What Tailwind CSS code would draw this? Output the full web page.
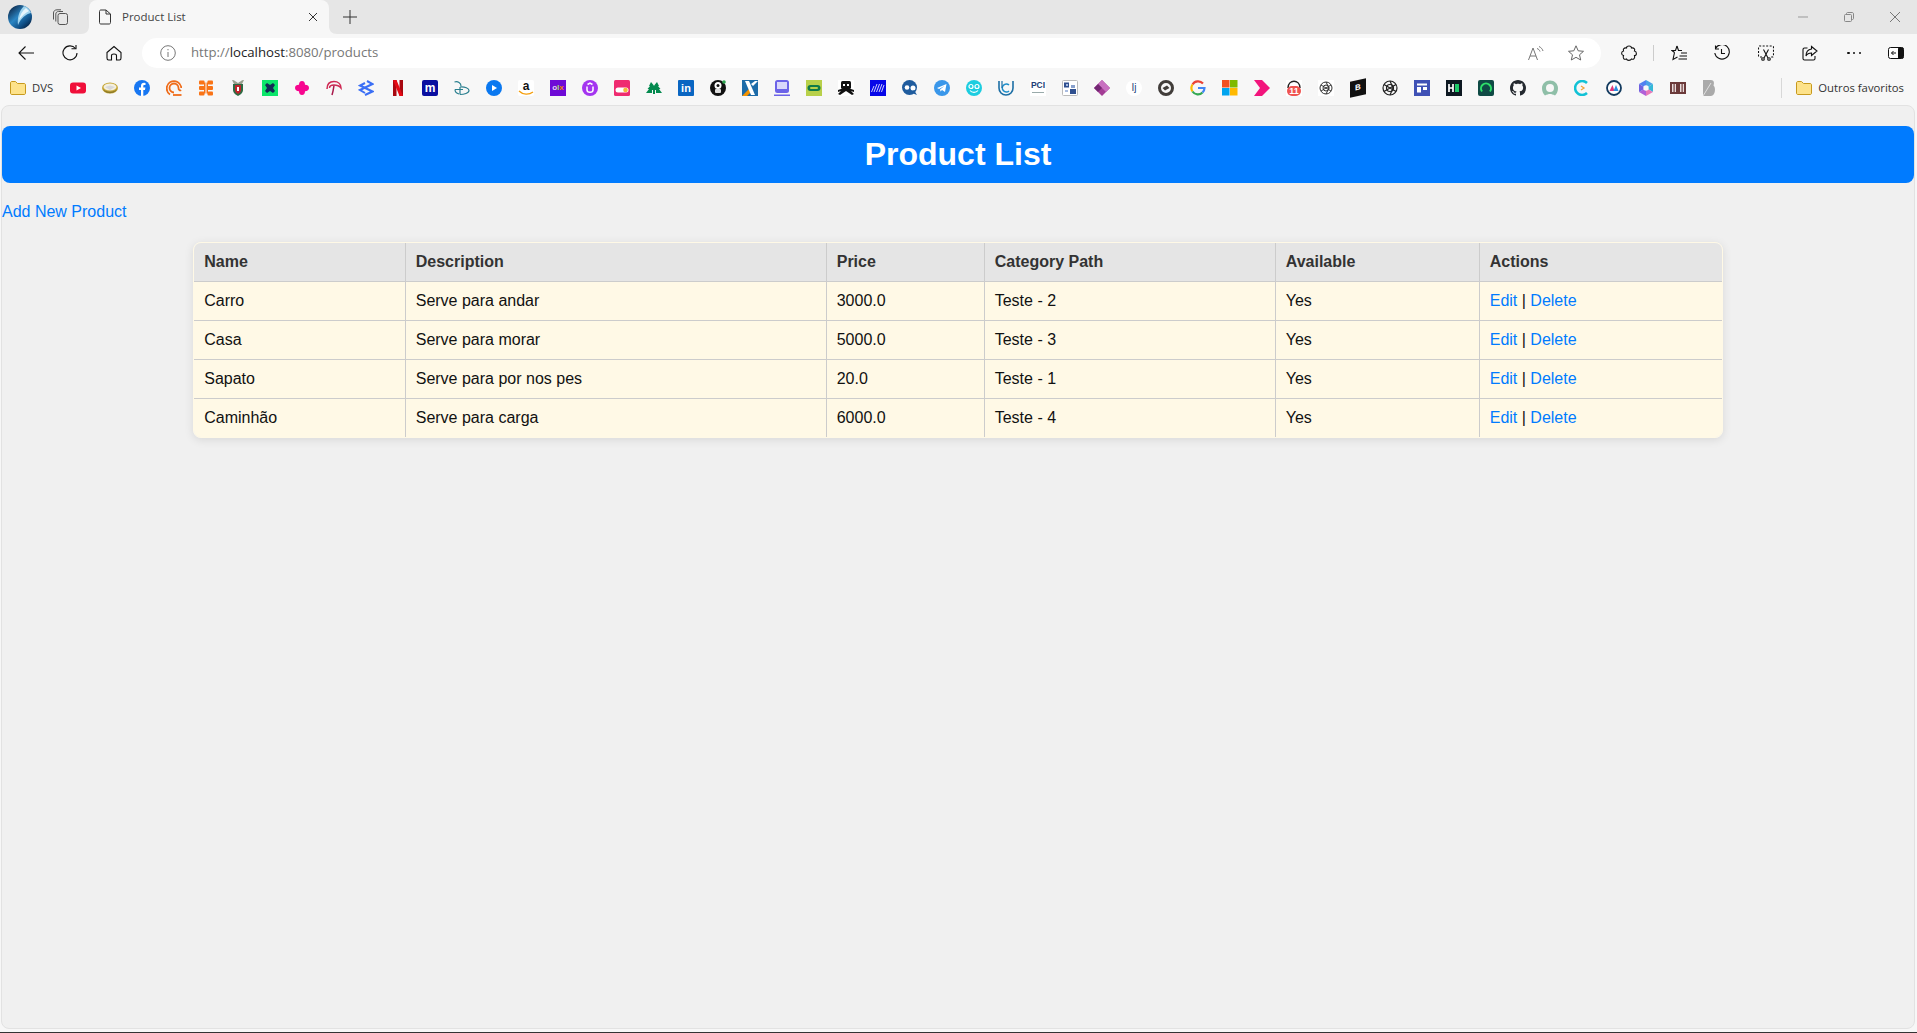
<!DOCTYPE html>
<html lang="pt">
<head>
<meta charset="utf-8">
<title>Product List</title>
<script src="https://cdn.jsdelivr.net/npm/@tailwindcss/browser@4"></script>
</head>
<body class="m-0 overflow-hidden bg-[#f7f7f7] font-['Liberation_Sans',Arial,sans-serif]">
<div class="flex h-[1033px] w-full flex-col">

  <!-- Tab strip -->
  <div class="flex h-[34px] shrink-0 items-center bg-[#e6e6e6]">
    <svg class="ml-2 h-6 w-6" viewBox="0 0 24 24">
      <defs>
        <linearGradient id="globe" x1="0.1" y1="0.2" x2="0.8" y2="1">
          <stop offset="0" stop-color="#12385f"/><stop offset="0.4" stop-color="#2b86c4"/><stop offset="0.75" stop-color="#0f4f86"/><stop offset="1" stop-color="#071f3d"/>
        </linearGradient>
      </defs>
      <circle cx="12" cy="12" r="12" fill="url(#globe)"/>
      <path d="M16 1C19 2 22 5 23 8C18 9 13 13 10 20C9 13 11 6 16 1Z" fill="#9fd3ee"/>
      <path d="M18 3C14 6 12 10 11 15C14 11 17 8 21 6Z" fill="#e6f5fc"/>
    </svg>
    <svg class="ml-[20px] h-4 w-4" viewBox="0 0 16 16" fill="none" stroke="#555" stroke-width="1">
      <rect x="6" y="4.500" width="9.500" height="11" rx="2" fill="#e6e6e6"/>
      <path d="M3.800 12.500V5C3.800 3.500 5 2.500 6.500 2.500L11 2.500"/><path d="M1.500 10.500V4C1.500 2 3 0.800 5 0.800H9"/>
    </svg>
    <div class="relative ml-[21px] flex h-[34px] w-[240px] items-center rounded-t-lg bg-[#f7f7f7] pl-2">
      <svg class="absolute -left-2 bottom-0 h-2 w-2" viewBox="0 0 8 8"><path d="M8 0V8H0C5 8 8 5 8 0Z" fill="#f7f7f7"/></svg>
      <svg class="absolute -right-2 bottom-0 h-2 w-2" viewBox="0 0 8 8"><path d="M0 0V8H8C3 8 0 5 0 0Z" fill="#f7f7f7"/></svg>
      <svg class="h-4 w-4" viewBox="0 0 16 16" fill="none" stroke="#333" stroke-width="1">
        <path d="M2.500 2.500C2.500 1.500 3 1 4 1H9L13.500 5V13.500C13.500 14.500 13 15 12 15H4C3 15 2.500 14.500 2.500 13.500Z"/><path d="M9 1V5H13.500"/>
      </svg>
      <span class="ml-[9px] font-['Open_Sans',sans-serif] text-[11.500px] text-[#444]">Product List</span>
      <svg class="absolute right-[11px] top-[12px] h-[10px] w-[10px]" viewBox="0 0 10 10" stroke="#333" stroke-width="1"><path d="M1 1L9 9M9 1L1 9"/></svg>
    </div>
    <svg class="ml-[14px] h-3.5 w-3.5" viewBox="0 0 14 14" stroke="#333" stroke-width="1"><path d="M7 0V14M0 7H14"/></svg>
    <div class="ml-auto flex items-center">
      <svg class="h-[10px] w-[10px]" viewBox="0 0 10 10" stroke="#999" stroke-width="1"><path d="M0 5H10"/></svg>
      <svg class="ml-[36px] h-[10px] w-[10px]" viewBox="0 0 10 10" stroke="#888" stroke-width="1" fill="none"><rect x="0.500" y="2.500" width="7" height="7" rx="1"/><path d="M2.500 2.500V1.500C2.500 1 3 0.500 3.500 0.500H8C9 0.500 9.500 1 9.500 2V6.500C9.500 7 9 7.500 8.500 7.500H7.500"/></svg>
      <svg class="mr-[17px] ml-[36px] h-[10px] w-[10px]" viewBox="0 0 10 10" stroke="#777" stroke-width="1"><path d="M0 0L10 10M10 0L0 10"/></svg>
    </div>
  </div>

  <!-- Toolbar -->
  <div class="flex h-[34px] shrink-0 items-center pt-[4px]">
    <svg class="ml-[18px] h-4 w-4" viewBox="0 0 16 16" fill="none" stroke="#111" stroke-width="1.100"><path d="M16 8H1M7.500 1.500L1 8L7.500 14.500"/></svg>
    <svg class="ml-[28px] h-4 w-4" viewBox="0 0 16 16" fill="none" stroke="#111" stroke-width="1.100"><path d="M13.500 3.500A7 7 0 1 0 15 8"/><path d="M9.500 3.800H14V0"/></svg>
    <svg class="ml-[28px] h-4 w-4" viewBox="0 0 16 16" fill="none" stroke="#111" stroke-width="1.100"><path d="M1 7.500L8 1.500L15 7.500V13C15 14 14.500 15 13.500 15H10.500V10.500C10.500 9.500 9.500 9 8 9C6.500 9 5.500 9.500 5.500 10.500V15H2.500C1.500 15 1 14 1 13Z"/></svg>
    <div class="ml-[20px] flex h-[30px] w-[1459px] items-center rounded-full bg-white">
      <svg class="ml-[18px] h-4 w-4" viewBox="0 0 16 16" fill="none" stroke="#777" stroke-width="1"><circle cx="8" cy="8" r="7.300"/><path d="M8 7V12M8 4V5.300"/></svg>
      <span class="ml-[15px] font-['Open_Sans',sans-serif] text-[13.200px] text-[#777]">http://<span class="text-[#222]">localhost</span>:8080/products</span>
      <svg class="ml-auto h-4 w-4" viewBox="0 0 16 16" fill="none" stroke="#777" stroke-width="1"><path d="M0.500 15L5 3L9.500 15M2 11H8"/><path d="M9 3.500C10.500 4 11.500 5 12 6.500M11 1.500C13 2.500 14.500 4 15 6"/></svg>
      <svg class="mr-[17px] ml-[24px] h-4 w-4" viewBox="0 0 16 16" fill="none" stroke="#666" stroke-width="1"><path d="M8 0.800L10.200 5.800L15.500 6.300L11.500 9.800L12.700 15L8 12.300L3.300 15L4.500 9.800L0.500 6.300L5.800 5.800Z"/></svg>
    </div>
    <svg class="ml-[20px] h-4 w-4" viewBox="0 0 16 16" fill="none" stroke="#111" stroke-width="1.100"><path d="M5.500 3C5.500 0.300 10.500 0.300 10.500 3C13 2.500 14.300 4 13.500 6C16 6.500 16 10.500 13.500 10.500C14.300 13 12.500 15 10.500 14C9.500 15.800 6 15.800 5.500 14C3 15 1.500 13 2.500 10.500C0 10 0 6.500 2.500 6C1.800 4 3 2.500 5.500 3Z"/></svg>
    <div class="ml-[16px] h-[16px] w-px bg-[#ccc]"></div>
    <svg class="ml-[17px] h-4 w-4" viewBox="0 0 16 16" fill="none" stroke="#111" stroke-width="1.100"><path d="M6 1L7.500 5.500H11M3.500 7.500L1 5.500H4.500L6 1M3.500 7.500L2 14.500L6.500 12M10 8H16M8.500 11H16M7.500 14H16"/></svg>
    <svg class="ml-[27px] h-4 w-4" viewBox="0 0 16 16" fill="none" stroke="#111" stroke-width="1.100"><path d="M1.500 3.500A7.300 7.300 0 1 1 0.800 8"/><path d="M1.500 0.500V4H5M7.500 4V8.500H11"/></svg>
    <svg class="ml-[28px] h-4 w-4" viewBox="0 0 16 16" fill="none" stroke="#111" stroke-width="1.100"><path d="M4 12H1.500C1 12 0.500 11.500 0.500 11V2C0.500 1.500 1 1 1.500 1H14.500C15 1 15.500 1.500 15.500 2V11C15.500 11.500 15 12 14.500 12H12" stroke-dasharray="2 1.500"/><path d="M5.500 4.500L10 13M10.500 4.500L6 13"/><circle cx="5" cy="14" r="1.300"/><circle cx="11" cy="14" r="1.300"/></svg>
    <svg class="ml-[28px] h-4 w-4" viewBox="0 0 16 16" fill="none" stroke="#111" stroke-width="1.100"><path d="M5.500 3H2.500C1.500 3 1 3.500 1 4.500V13.500C1 14.500 1.500 15 2.500 15H11.500C12.500 15 13 14.500 13 13.500V11"/><path d="M9.500 1.500L15 6L9.500 10.500V8C7 8 5 9 4 11C4 7.500 6 4.500 9.500 4Z"/></svg>
    <div class="ml-[28px] flex h-4 w-4 items-center justify-between px-[1px]">
      <span class="h-[2.500px] w-[2.500px] rounded-full bg-[#111]"></span><span class="h-[2.500px] w-[2.500px] rounded-full bg-[#111]"></span><span class="h-[2.500px] w-[2.500px] rounded-full bg-[#111]"></span>
    </div>
    <svg class="ml-[26px] h-4 w-4" viewBox="0 0 16 16"><rect x="0.500" y="2.500" width="15" height="11" rx="2" fill="#fff" stroke="#111"/><rect x="10" y="2.500" width="5.500" height="11" rx="1" fill="#111"/><path d="M8 8H3.500M5.500 6L3.500 8L5.500 10" fill="none" stroke="#111"/></svg>
  </div>

  <!-- Favorites bar -->
  <div class="flex h-[37px] shrink-0 items-center pt-[3px]">
    <svg class="ml-[10px] h-4 w-4 shrink-0" viewBox="0 0 16 16"><path d="M0.500 3C0.500 2 1 1.500 2 1.500H5.500L7.500 3.500H14C15 3.500 15.500 4 15.500 5V13C15.500 14 15 14.500 14 14.500H2C1 14.500 0.500 14 0.500 13Z" fill="#fde28a" stroke="#c79a1e"/></svg>
    <span class="ml-[6px] w-[23px] font-['Open_Sans',sans-serif] text-[11.300px] text-[#333]">DVS</span>
    <div class="ml-[15px] flex items-center gap-4">
      <!-- youtube -->
      <svg class="h-4 w-4" viewBox="0 0 16 16"><rect y="2.500" width="16" height="11" rx="3" fill="#f00f3a"/><path d="M6.500 5.500L11 8L6.500 10.500Z" fill="#fff"/></svg>
      <!-- handshake -->
      <svg class="h-4 w-4" viewBox="0 0 16 16"><ellipse cx="8" cy="8" rx="8" ry="5.500" fill="#c7a83a"/><ellipse cx="8" cy="7" rx="6.500" ry="3.500" fill="#f4f0e0"/><path d="M3 7L8 5.500L13 7L8 10Z" fill="#d8d8d8"/><path d="M1 9C4 12.500 12 12.500 15 9L14 11C10 14 6 14 2 11Z" fill="#8c7a2a"/></svg>
      <!-- facebook -->
      <svg class="h-4 w-4" viewBox="0 0 16 16"><circle cx="8" cy="8" r="8" fill="#1877f2"/><path d="M7 16V10H5V7.500H7V5.800C7 3.800 8.200 2.800 10 2.800L11.500 3V5H10.500C9.500 5 9.300 5.500 9.300 6.200V7.500H11.400L11 10H9.300V16Z" fill="#fff"/></svg>
      <!-- orange rings -->
      <svg class="h-4 w-4" viewBox="0 0 16 16" fill="none" stroke="#ef6c1a" stroke-width="1.800"><path d="M4 14.500A7.300 7.300 0 1 1 15.300 8"/><path d="M8 12.500A4.500 4.500 0 1 1 12.500 8C12.500 10 14 11 15 10"/><path d="M7 15H15.500"/></svg>
      <!-- orange blocks -->
      <svg class="h-4 w-4" viewBox="0 0 16 16" fill="#f97316"><rect x="1" y="0.500" width="5.500" height="4" rx="1"/><rect x="9.500" y="0.500" width="5.500" height="4" rx="1"/><rect x="1" y="6" width="5.500" height="4" rx="1"/><rect x="9.500" y="6" width="5.500" height="4" rx="1"/><rect x="1" y="11.500" width="5.500" height="4" rx="1"/><rect x="9.500" y="11.500" width="5.500" height="4" rx="1"/><path d="M6 2.500H7.500V13.500H6ZM8.500 2.500H10V13.500H8.500Z"/></svg>
      <!-- crest -->
      <svg class="h-4 w-4" viewBox="0 0 16 16"><path d="M2 0C5 0 6 2 8 3C10 2 11 0 14 0L12 4H4Z" fill="#9aa08f"/><path d="M3 4H13V10C13 13 10 15 8 16C6 15 3 13 3 10Z" fill="#2e6b45"/><path d="M5 5H11V10C11 12 9.500 13 8 14C6.500 13 5 12 5 10Z" fill="#c0242c"/><rect x="7" y="7" width="2" height="4" fill="#fff"/></svg>
      <!-- green x -->
      <svg class="h-4 w-4" viewBox="0 0 16 16"><rect width="16" height="16" fill="#0be56a"/><path d="M3 5L5 3L8 5L11 3L13 5L11 8L13 11L11 13L8 11L5 13L3 11L5 8Z" fill="#122a55"/></svg>
      <!-- pink clover -->
      <svg class="h-4 w-4" viewBox="0 0 16 16" fill="#f7068f"><path d="M8 1C10 1 11 2.500 11 4.800C13.500 4.800 15 6 15 8C15 10 13.500 11.200 11 11.200C11 13.500 10 15 8 15C6 15 5 13.500 5 11.200C2.500 11.200 1 10 1 8C1 6 2.500 4.800 5 4.800C5 2.500 6 1 8 1Z"/></svg>
      <!-- red arc -->
      <svg class="h-4 w-4" viewBox="0 0 16 16" fill="none" stroke="#cf2a54" stroke-width="1.500"><path d="M1 9C1 4 4 1.500 8 1.500C12 1.500 15 4 15 8C13 5.500 10 5 8 5C5.500 5 3.500 6 3.500 8"/><path d="M8 5.500C7.500 9 7 12 6 15" stroke="#a8174a"/></svg>
      <!-- banco do brasil -->
      <svg class="h-4 w-4" viewBox="0 0 16 16" fill="none" stroke="#3b6ff5" stroke-width="2"><path d="M9 1L14.500 4L2 10L7 13"/><path d="M7 15L14.500 11.500L2 5.500L7 3"/></svg>
      <!-- netflix -->
      <svg class="h-4 w-4" viewBox="0 0 16 16"><rect x="3" width="3.500" height="16" fill="#a80710"/><rect x="9.500" width="3.500" height="16" fill="#a80710"/><path d="M3 0H6.500L13 16H9.500Z" fill="#e50914"/></svg>
      <!-- m -->
      <div class="flex h-4 w-4 items-center justify-center rounded-[2px] bg-[#0a0fa0] text-[12px] font-bold leading-none text-white">m</div>
      <!-- disney -->
      <svg class="h-4 w-4" viewBox="0 0 16 16" fill="none" stroke="#2a7f8f" stroke-width="1.200"><path d="M0.500 2C4 1 7 3 7 6M6 7V14.500M6 7C11 6.500 15 8.500 15 10.500C15 13 10 14.500 6 14.500"/><path d="M1 9.500H9M1 9.500C1 12 3 13.500 5 14"/></svg>
      <!-- play -->
      <svg class="h-4 w-4" viewBox="0 0 16 16"><circle cx="8" cy="8" r="8" fill="#0a78f0"/><path d="M6 5L11 8L6 11Z" fill="#fff"/></svg>
      <!-- amazon -->
      <div class="relative flex h-4 w-4 justify-center rounded-[2px] bg-white text-[12px] font-bold leading-[12px] text-[#111]">a<svg class="absolute bottom-0 left-0 h-[6px] w-4" viewBox="0 0 16 6" fill="none" stroke="#f59e0b" stroke-width="1.300"><path d="M1 1C5 5 11 5 15 2"/></svg></div>
      <!-- olx -->
      <div class="flex h-4 w-4 items-center justify-center bg-[#6e0ad6] text-[8px] font-bold leading-none"><span class="text-[#e0d4f5]">o</span><span class="text-[#9be15d]">l</span><span class="text-[#f28000]">x</span></div>
      <!-- udemy -->
      <svg class="h-4 w-4" viewBox="0 0 16 16"><circle cx="8" cy="8" r="8" fill="#a435f0"/><path d="M5 6.500V10C5 13 11 13 11 10V6.500M5.500 4.500L8 3L10.500 4.500" fill="none" stroke="#fff" stroke-width="1.500"/></svg>
      <!-- pink toggle -->
      <svg class="h-4 w-4" viewBox="0 0 16 16"><rect width="16" height="16" rx="1.500" fill="#ef2b70"/><rect x="1.500" y="7.500" width="13" height="5" rx="2.500" fill="#fff"/><circle cx="11.500" cy="10" r="2.300" fill="#f5b93a"/></svg>
      <!-- green trees -->
      <svg class="h-4 w-4" viewBox="0 0 16 16" fill="#048a4f"><path d="M5 2L7.500 5L8 6L8.500 5L11 2L13 6H12L14.500 9H13L16 13H10V10H9V14H7V10H6V13H0L3 9H1.500L4 6H3Z"/></svg>
      <!-- linkedin -->
      <div class="flex h-4 w-4 items-center justify-center rounded-[1px] bg-[#0a66c2] text-[11px] font-bold leading-none text-white">in</div>
      <!-- black mascot -->
      <svg class="h-4 w-4" viewBox="0 0 16 16"><circle cx="8" cy="8" r="8" fill="#111"/><circle cx="8" cy="5.500" r="3.500" fill="#fff"/><rect x="5" y="9" width="6" height="4" rx="1" fill="#ddd"/><circle cx="8" cy="5.500" r="1.500" fill="#111"/><circle cx="14" cy="2" r="1.800" fill="#2ea44f"/></svg>
      <!-- caixa -->
      <svg class="h-4 w-4" viewBox="0 0 16 16"><rect width="16" height="16" fill="#1c6ba8"/><path d="M0 16L8 8L10 11L5 16Z" fill="#f39200"/><path d="M3 1H7L13 15H9Z" fill="#fff"/><path d="M13 1H16L11 6L9 4Z" fill="#fff"/></svg>
      <!-- monitor -->
      <svg class="h-4 w-4" viewBox="0 0 16 16"><rect x="1" width="14" height="13" rx="2.500" fill="#6c63e8"/><rect x="3" y="2" width="10" height="7" fill="#d9d7fb"/><rect y="14.500" width="16" height="1.500" fill="#6c63e8"/></svg>
      <!-- green glasses -->
      <svg class="h-4 w-4" viewBox="0 0 16 16"><rect width="16" height="16" fill="#b8d04a"/><rect x="1.500" y="5" width="13" height="6" rx="3" fill="#0f7a4a"/><rect x="4" y="7" width="8" height="2" rx="1" fill="#b8d04a"/></svg>
      <!-- skull -->
      <svg class="h-4 w-4" viewBox="0 0 16 16"><rect width="16" height="16" fill="#fff"/><rect x="3" y="1" width="10" height="8" rx="1.500" fill="#111"/><path d="M0 10L3 9L13 9L16 10V12L13 11L16 14L14 15L8 11L2 15L0 14L3 11L0 12Z" fill="#111"/><rect x="5" y="4" width="2" height="2" fill="#fff"/><rect x="9" y="4" width="2" height="2" fill="#fff"/></svg>
      <!-- blue lines -->
      <svg class="h-4 w-4" viewBox="0 0 16 16"><rect width="16" height="16" fill="#0606e8"/><path d="M4 12L7 4M6.500 12L9.500 4M9 12L12 4M11.500 12L14 5M1.500 12L4 6" stroke="#fff" stroke-width="0.800"/></svg>
      <!-- blue chat -->
      <svg class="h-4 w-4" viewBox="0 0 16 16"><circle cx="7.500" cy="7.500" r="7.500" fill="#1f5c9e"/><circle cx="5" cy="7.500" r="2.300" fill="#fff"/><circle cx="11" cy="8" r="2.500" fill="#fff"/><path d="M12 10L15 15L10 13Z" fill="#1f5c9e"/></svg>
      <!-- telegram -->
      <svg class="h-4 w-4" viewBox="0 0 16 16"><circle cx="8" cy="8" r="8" fill="#3a97ea"/><path d="M3 8L12.500 4L11 12L8 10L6.500 11.500L6 9.500L10.500 6L5 9Z" fill="#fff"/></svg>
      <!-- smile -->
      <svg class="h-4 w-4" viewBox="0 0 16 16"><circle cx="8" cy="8" r="8" fill="#1ccde0"/><circle cx="5" cy="6.500" r="2" fill="none" stroke="#fff" stroke-width="1.200"/><circle cx="11" cy="6.500" r="2" fill="none" stroke="#fff" stroke-width="1.200"/><path d="M4 10.500C6 13 10 13 12 10.500" fill="none" stroke="#fff" stroke-width="1.200"/></svg>
      <!-- blue c -->
      <svg class="h-4 w-4" viewBox="0 0 16 16" fill="none"><path d="M1 1V8C1 12 4 15 8 15C12 15 15 12 15 8V1" stroke="#1d6fa5" stroke-width="1.600"/><path d="M11 5A4 4 0 1 0 11 11" stroke="#1d8dc9" stroke-width="1.600"/><path d="M4 1V8" stroke="#1d6fa5" stroke-width="1.200"/></svg>
      <!-- pci -->
      <div class="flex h-4 w-4 flex-col items-center bg-white text-[8.500px] font-bold leading-[11px] text-[#1f3f77]">PCI<span class="mt-[1px] h-px w-3 bg-[#9aa]"></span></div>
      <!-- pixel squares -->
      <svg class="h-4 w-4" viewBox="0 0 16 16"><rect x="0.500" y="0.500" width="15" height="15" rx="1" fill="#fff" stroke="#bbb"/><rect x="2" y="2.500" width="5" height="5" fill="#2f4f8f"/><rect x="4" y="4" width="2" height="2" fill="#a9bce0"/><rect x="9" y="5" width="4" height="3" fill="#88a0cc"/><rect x="8" y="9" width="6" height="5" fill="#2f4f8f"/><rect x="3" y="10" width="3" height="2" fill="#a9bce0"/></svg>
      <!-- power apps -->
      <svg class="h-4 w-4" viewBox="0 0 16 16"><path d="M8 0L16 8L8 16L0 8Z" fill="#a33d95"/><path d="M8 0L16 8L12 12L4 4Z" fill="#c86fc0"/><path d="M4 4L8 8L4 12L0 8Z" fill="#742774"/></svg>
      <!-- intellij -->
      <div class="flex h-4 w-4 items-center justify-center rounded-full bg-white text-[10px] leading-none text-[#1f3f77]">Ij</div>
      <!-- dark circle -->
      <svg class="h-4 w-4" viewBox="0 0 16 16" fill="none"><circle cx="8" cy="8" r="6.500" stroke="#413d3a" stroke-width="3"/><path d="M4.500 8L9 5.500L11.500 8L7 10.500Z" fill="#413d3a"/></svg>
      <!-- google -->
      <svg class="h-4 w-4" viewBox="0 0 16 16" fill="none" stroke-width="2.200"><path d="M13 3.500A6.500 6.500 0 0 0 2.500 4.500" stroke="#ea4335"/><path d="M2.500 4.500A6.500 6.500 0 0 0 2.500 11.500" stroke="#fbbc05"/><path d="M2.500 11.500A6.500 6.500 0 0 0 12.500 12.500" stroke="#34a853"/><path d="M12.500 12.500C14 11 14.500 9.500 14.500 8H8" stroke="#4285f4"/></svg>
      <!-- microsoft -->
      <svg class="h-4 w-4" viewBox="0 0 16 16"><rect width="7.500" height="7.500" fill="#f25022"/><rect x="8" width="7.500" height="7.500" fill="#7fba00"/><rect y="8" width="7.500" height="7.500" fill="#00a4ef"/><rect x="8" y="8" width="7.500" height="7.500" fill="#ffb900"/></svg>
      <!-- pink arrow -->
      <svg class="h-4 w-4" viewBox="0 0 16 16"><path d="M0 0H8L16 8L8 16H0L6 8Z" fill="#f2147c"/></svg>
      <!-- red badge -->
      <div class="relative flex h-4 w-4 items-end justify-center bg-white">
        <svg class="absolute left-0 top-0 h-4 w-4" viewBox="0 0 16 16" fill="none" stroke="#222" stroke-width="1.500"><path d="M2 8C2 -1 14 -1 14 8"/></svg>
        <span class="relative h-[10px] w-[14px] rounded-full bg-[#ef5350] text-center text-[9px] font-bold leading-[10px] text-white">11</span>
      </div>
      <!-- gpt small -->
      <svg class="h-4 w-4" viewBox="0 0 16 16" fill="none" stroke="#333" stroke-width="1"><rect width="16" height="16" fill="#fff" stroke="none"/><circle cx="8" cy="8" r="6"/><circle cx="8" cy="8" r="3"/><path d="M8 2L11 8L8 14M3 5L8 8L13 11M13 5L8 8L3 11"/></svg>
      <!-- black b -->
      <div class="flex h-4 w-4 -skew-y-12 items-center justify-center bg-[#111] text-[8px] font-bold leading-none text-white">B</div>
      <!-- gpt -->
      <svg class="h-4 w-4" viewBox="0 0 16 16" fill="none" stroke="#222" stroke-width="1.200"><circle cx="8" cy="8" r="7"/><circle cx="8" cy="8" r="3.500"/><path d="M8 1L11 8L8 15M2 4.500L8 8L14 11.500M14 4.500L8 8L2 11.500"/></svg>
      <!-- layout -->
      <svg class="h-4 w-4" viewBox="0 0 16 16"><rect width="16" height="16" fill="#3f51b5"/><rect x="3" y="3.500" width="10" height="2" fill="#fff"/><rect x="3" y="7" width="4" height="5.500" fill="#fff"/><rect x="9" y="7" width="4" height="3" fill="#fff"/></svg>
      <!-- hn -->
      <svg class="h-4 w-4" viewBox="0 0 16 16"><rect width="16" height="16" fill="#0d1821"/><path d="M3 4V12M7 4V12M3 8H7" stroke="#fff" stroke-width="1.700"/><rect x="9" y="4" width="4" height="8" fill="#1ec96a"/></svg>
      <!-- green ring -->
      <svg class="h-4 w-4" viewBox="0 0 16 16"><rect width="16" height="16" rx="2" fill="#0f4a45"/><path d="M4 11.500A5 5 0 1 1 12 11.500" fill="none" stroke="#2ee06a" stroke-width="2"/></svg>
      <!-- github -->
      <svg class="h-4 w-4" viewBox="0 0 16 16"><path d="M8 0C3.580 0 0 3.580 0 8c0 3.540 2.290 6.530 5.470 7.590.4.070.55-.17.55-.38 0-.19-.01-.82-.01-1.490-2.010.37-2.530-.49-2.690-.94-.09-.23-.48-.94-.82-1.130-.28-.15-.68-.52-.01-.53.63-.01 1.080.58 1.230.82.720 1.210 1.870.87 2.330.66.070-.52.280-.87.510-1.070-1.780-.2-3.640-.89-3.640-3.950 0-.87.310-1.590.820-2.150-.080-.2-.360-1.020.080-2.120 0 0 .670-.210 2.200.820.640-.180 1.320-.270 2-.270s1.360.090 2 .270c1.530-1.040 2.200-.820 2.200-.820.440 1.100.160 1.920.080 2.120.510.560.820 1.270.820 2.150 0 3.070-1.870 3.750-3.650 3.950.290.250.540.730.540 1.480 0 1.070-.010 1.930-.010 2.200 0 .210.150.460.550.380A8.010 8.010 0 0 0 16 8c0-4.420-3.580-8-8-8z" fill="#24292f"/></svg>
      <!-- sage ring -->
      <svg class="h-4 w-4" viewBox="0 0 16 16"><path d="M8 0.500C12.500 0.500 16 4 16 8C16 11 15 14 13 15.500C11 14.500 9.500 14 8 14C6.500 14 5 14.500 3 15.500C1 14 0 11 0 8C0 4 3.500 0.500 8 0.500Z" fill="#8fbfa8"/><circle cx="8" cy="8" r="4" fill="#f7f7f7"/></svg>
      <!-- cyan c -->
      <svg class="h-4 w-4" viewBox="0 0 16 16" fill="none"><path d="M13 3A7 7 0 1 0 13 13" stroke="#12c2d6" stroke-width="2.500"/><path d="M7 6L10 8L7 10" stroke="#f2a33a" stroke-width="1.300"/></svg>
      <!-- navy ring -->
      <svg class="h-4 w-4" viewBox="0 0 16 16"><circle cx="8" cy="8" r="7" fill="#fff" stroke="#123a5e" stroke-width="1.800"/><path d="M3.500 11L6.500 5L8.500 11Z" fill="#e0387a"/><path d="M7.500 11L10 5L12.500 11Z" fill="#2a8fe0"/></svg>
      <!-- copilot -->
      <svg class="h-4 w-4" viewBox="0 0 16 16"><path d="M8 0L15 4L8 8Z" fill="#4aa3e8"/><path d="M15 4V12L8 8Z" fill="#35b8d8"/><path d="M15 12L8 16L8 8Z" fill="#e878b8"/><path d="M8 16L1 12L8 8Z" fill="#b060d8"/><path d="M1 12V4L8 8Z" fill="#7060e0"/><path d="M1 4L8 0V8Z" fill="#5080f0"/><circle cx="8" cy="8" r="2.700" fill="#f7f7f7"/></svg>
      <!-- maroon book -->
      <svg class="h-4 w-4" viewBox="0 0 16 16"><rect y="2" width="16" height="12" fill="#6b3a3a"/><rect x="2" y="4" width="4" height="8" fill="#e9dcdc"/><rect x="10" y="4" width="4" height="8" fill="#e9dcdc"/><rect x="3.500" y="4" width="1.200" height="8" fill="#6b3a3a"/><rect x="11.500" y="4" width="1.200" height="8" fill="#6b3a3a"/></svg>
      <!-- gray b -->
      <svg class="h-4 w-4" viewBox="0 0 16 16"><path d="M1 0H9C12 0 12.500 3 11.500 5.500C14 7 13.500 16 9 16H1Z" fill="#aaa"/><path d="M1 16L9 3" stroke="#eee" stroke-width="0.800"/></svg>
    </div>
    <div class="ml-auto h-[20px] w-px bg-[#d8d8d8]"></div>
    <svg class="ml-[14px] h-4 w-4 shrink-0" viewBox="0 0 16 16"><path d="M0.500 3C0.500 2 1 1.500 2 1.500H5.500L7.500 3.500H14C15 3.500 15.500 4 15.500 5V13C15.500 14 15 14.500 14 14.500H2C1 14.500 0.500 14 0.500 13Z" fill="#fde28a" stroke="#c79a1e"/></svg>
    <span class="mr-[13px] ml-[6px] font-['Open_Sans',sans-serif] text-[11.300px] text-[#333]">Outros favoritos</span>
  </div>

  <!-- Page -->
  <main class="mr-[2px] mb-[3px] ml-[1px] flex-1 rounded-lg border border-[#e2e2e2] bg-[#f0f0f0] pt-[20px] text-base text-[#111]">
    <h1 class="flex h-[57px] items-center justify-center rounded-lg bg-[#007bff] pb-[2px] text-[32px] font-bold text-white">Product List</h1>
    <a href="#" class="mt-[20px] block leading-[18px] text-[#007bff]">Add New Product</a>
    <div class="mx-auto mt-[21px] w-4/5 overflow-hidden rounded-lg border border-[#fff9e6] shadow-[0_2px_10px_rgba(0,0,0,0.1)]">
      <table class="w-full table-fixed border-collapse bg-[#fff9e6] text-left">
        <thead>
          <tr class="h-[38px] bg-[#e5e5e5] text-[#333]">
            <th class="w-[211px] border-r border-b border-[#ccc] px-2.5">Name</th>
            <th class="w-[421px] border-r border-b border-[#ccc] px-2.5">Description</th>
            <th class="w-[158px] border-r border-b border-[#ccc] px-2.5">Price</th>
            <th class="w-[291px] border-r border-b border-[#ccc] px-2.5">Category Path</th>
            <th class="w-[204px] border-r border-b border-[#ccc] px-2.5">Available</th>
            <th class="border-b border-[#ccc] px-2.5">Actions</th>
          </tr>
        </thead>
        <tbody>
          <tr class="h-[39px]">
            <td class="border-r border-b border-[#ccc] px-2.5">Carro</td>
            <td class="border-r border-b border-[#ccc] px-2.5">Serve para andar</td>
            <td class="border-r border-b border-[#ccc] px-2.5">3000.0</td>
            <td class="border-r border-b border-[#ccc] px-2.5">Teste - 2</td>
            <td class="border-r border-b border-[#ccc] px-2.5">Yes</td>
            <td class="border-b border-[#ccc] px-2.5"><a href="#" class="text-[#007bff]">Edit</a> | <a href="#" class="text-[#007bff]">Delete</a></td>
          </tr>
          <tr class="h-[39px]">
            <td class="border-r border-b border-[#ccc] px-2.5">Casa</td>
            <td class="border-r border-b border-[#ccc] px-2.5">Serve para morar</td>
            <td class="border-r border-b border-[#ccc] px-2.5">5000.0</td>
            <td class="border-r border-b border-[#ccc] px-2.5">Teste - 3</td>
            <td class="border-r border-b border-[#ccc] px-2.5">Yes</td>
            <td class="border-b border-[#ccc] px-2.5"><a href="#" class="text-[#007bff]">Edit</a> | <a href="#" class="text-[#007bff]">Delete</a></td>
          </tr>
          <tr class="h-[39px]">
            <td class="border-r border-b border-[#ccc] px-2.5">Sapato</td>
            <td class="border-r border-b border-[#ccc] px-2.5">Serve para por nos pes</td>
            <td class="border-r border-b border-[#ccc] px-2.5">20.0</td>
            <td class="border-r border-b border-[#ccc] px-2.5">Teste - 1</td>
            <td class="border-r border-b border-[#ccc] px-2.5">Yes</td>
            <td class="border-b border-[#ccc] px-2.5"><a href="#" class="text-[#007bff]">Edit</a> | <a href="#" class="text-[#007bff]">Delete</a></td>
          </tr>
          <tr class="h-[39px]">
            <td class="border-r border-[#ccc] px-2.5">Caminhão</td>
            <td class="border-r border-[#ccc] px-2.5">Serve para carga</td>
            <td class="border-r border-[#ccc] px-2.5">6000.0</td>
            <td class="border-r border-[#ccc] px-2.5">Teste - 4</td>
            <td class="border-r border-[#ccc] px-2.5">Yes</td>
            <td class="px-2.5"><a href="#" class="text-[#007bff]">Edit</a> | <a href="#" class="text-[#007bff]">Delete</a></td>
          </tr>
        </tbody>
      </table>
    </div>
  </main>
  <div class="h-px shrink-0 bg-[#333]"></div>
</div>
</body>
</html>
